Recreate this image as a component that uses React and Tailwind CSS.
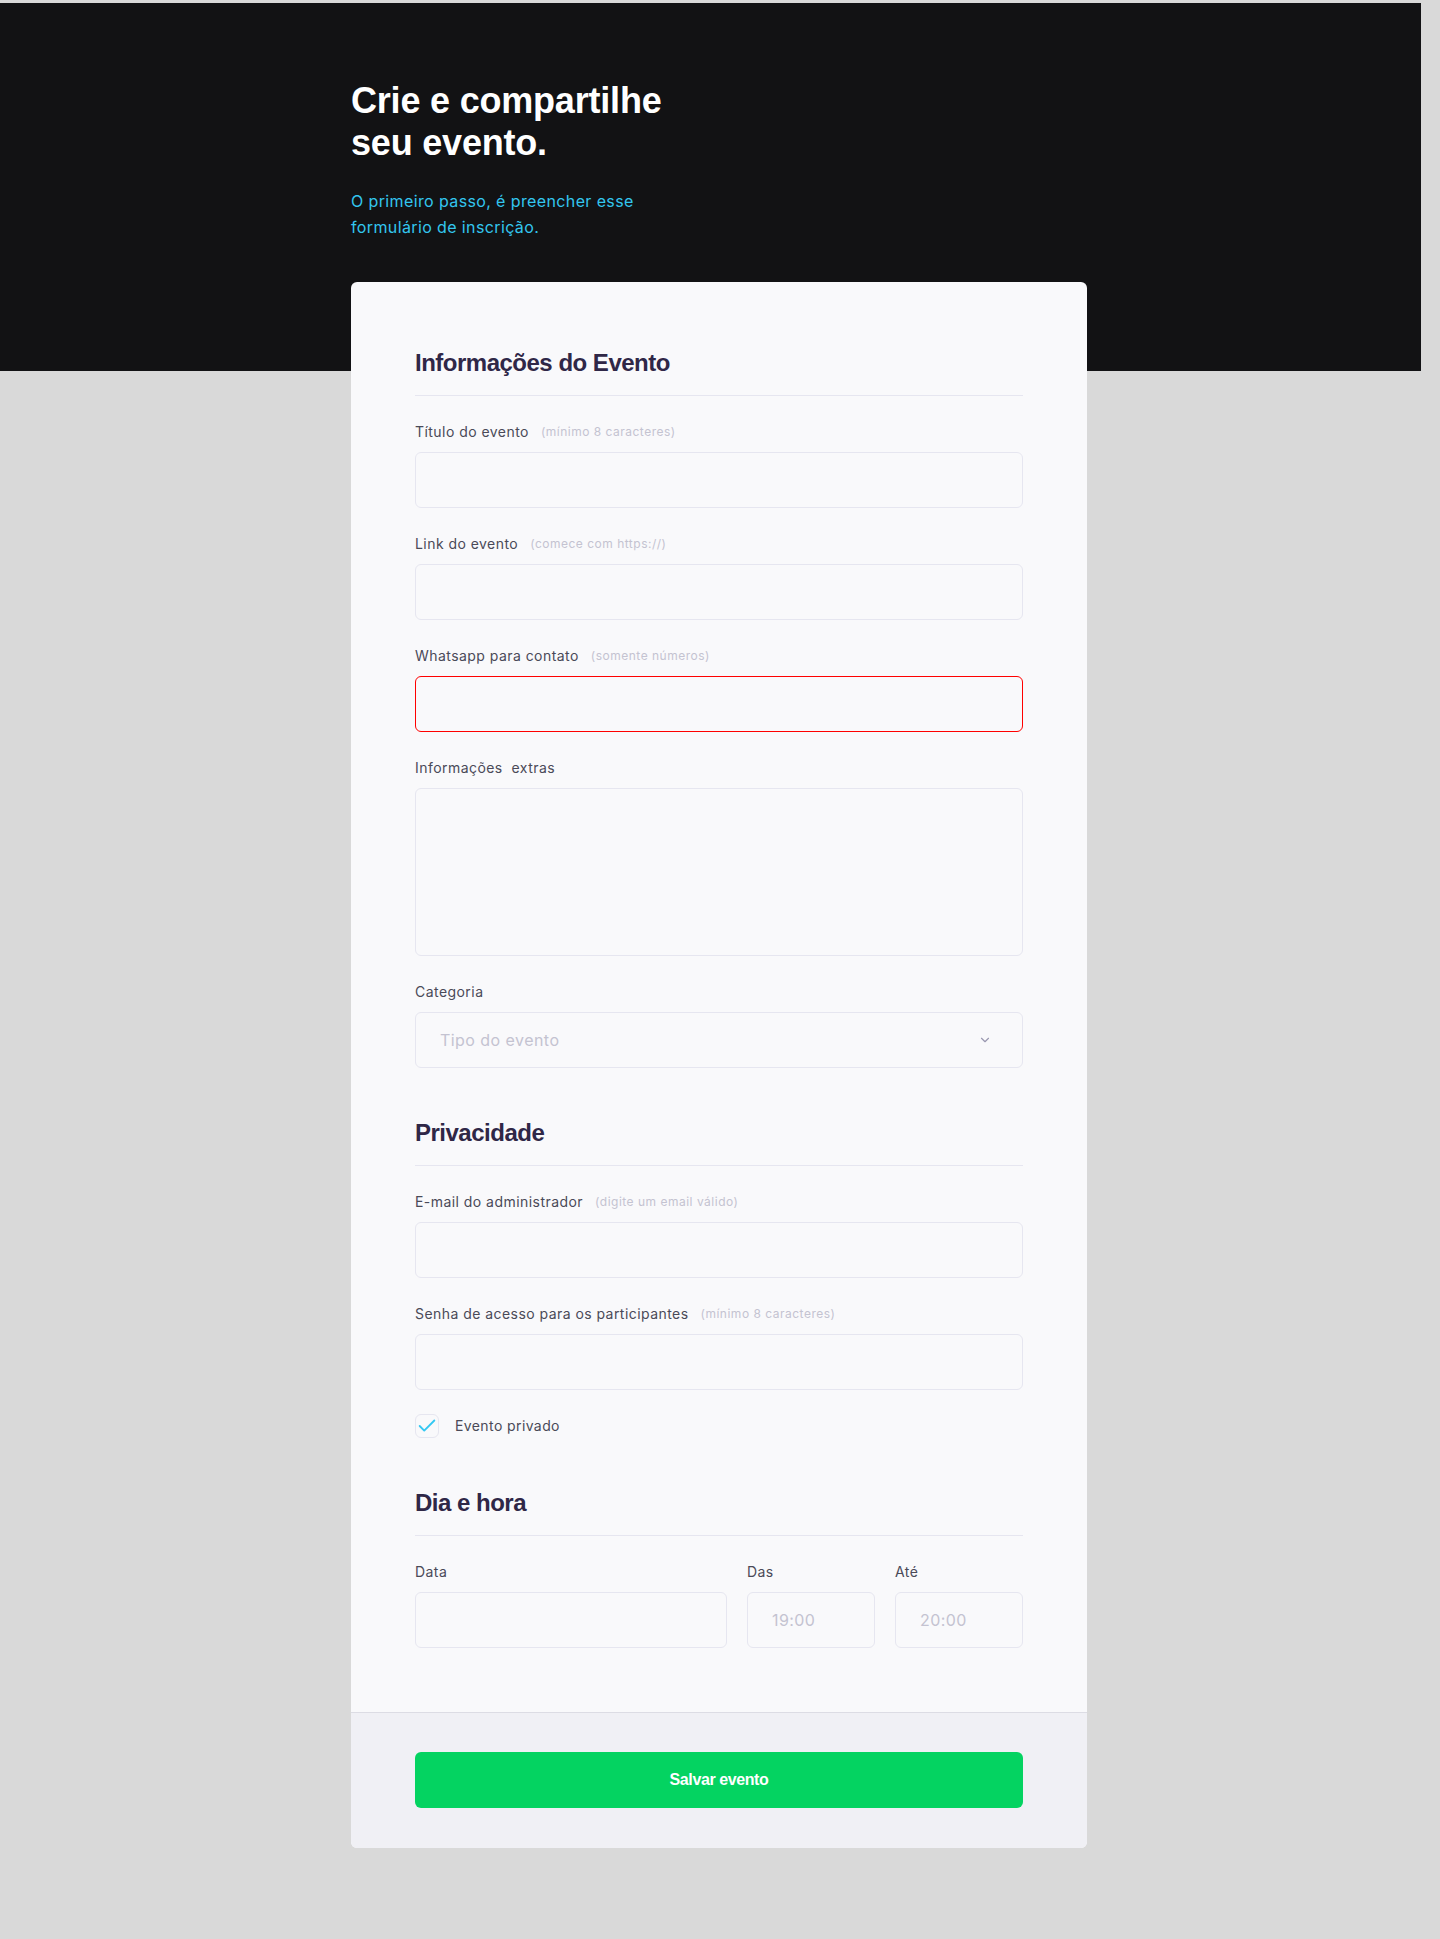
import { Check, ChevronDown } from 'lucide-react';

const body = { fontFamily: 'Inter, "Open Sans", sans-serif' };
const display = { fontFamily: '"Liberation Sans", Arial, sans-serif' };

function Label({ text, hint }) {
  return (
    <div className="mb-2 flex h-6 items-center">
      <span className="text-sm tracking-[0.45px] text-[#4a4a58]">{text}</span>
      {hint && <span className="ml-3 text-xs tracking-[0.5px] text-[#c4c3d1]">{hint}</span>}
    </div>
  );
}

function Field({ label, hint, error, tall }) {
  const border = error ? 'border-[#ff0000]' : 'border-[#e6e6f0]';
  return (
    <div>
      <Label text={label} hint={hint} />
      {tall ? (
        <textarea className={`block h-[168px] w-full resize-none rounded-md border ${border} bg-[#f9f9fb] px-6 py-4 outline-none`} />
      ) : (
        <input className={`block h-14 w-full rounded-md border ${border} bg-[#f9f9fb] px-6 outline-none`} />
      )}
    </div>
  );
}

function SectionTitle({ children, first }) {
  return (
    <h2
      style={display}
      className={`${first ? '' : 'mt-[49px]'} border-b border-[#e6e6f0] pb-4 text-2xl leading-8 font-bold tracking-[-0.5px] text-[#2f2747]`}
    >
      {children}
    </h2>
  );
}

export default function App() {
  return (
    <div style={body} className="min-h-screen bg-[#d9d9d9] pt-[3px] pb-[92px]">
      {/* HEADER */}
      <header className="bg-[#121214] pt-[77px] pb-[131px] shadow-[inset_-19px_0_0_#d9d9d9]">
        <div className="ml-[calc(50%-369px)] w-[736px]">
          <h1 style={display} className="text-[36px] leading-[42px] font-bold tracking-[-0.2px] text-white">
            Crie e compartilhe
            <br />
            seu evento.
          </h1>
          <p className="mt-6 text-base leading-[26px] tracking-[0.38px] text-[#33c6ef]">
            O primeiro passo, é preencher esse
            <br />
            formulário de inscrição.
          </p>
        </div>
      </header>

      {/* CARD */}
      <div className="-mt-[89px] ml-[calc(50%-369px)] w-[736px] overflow-hidden rounded-md bg-[#f9f9fb]">
        <div className="px-16 pt-[65px] pb-16">
          <SectionTitle first>Informações do Evento</SectionTitle>
          <div className="mt-6 space-y-6">
            <Field label="Título do evento" hint="(mínimo 8 caracteres)" />
            <Field label="Link do evento" hint="(comece com https://)" />
            <Field label="Whatsapp para contato" hint="(somente números)" error />
            <Field label={'Informações\u00a0 extras'} tall />
            <div>
              <Label text="Categoria" />
              <div className="flex h-14 w-full items-center justify-between rounded-md border border-[#e6e6f0] bg-[#f9f9fb] pr-[30px] pl-6">
                <span className="text-base tracking-[0.45px] text-[#c4c3d1]">Tipo do evento</span>
                <ChevronDown size={14} strokeWidth={2} className="text-[#9a98b0]" />
              </div>
            </div>
          </div>

          <SectionTitle>Privacidade</SectionTitle>
          <div className="mt-6 space-y-6">
            <Field label="E-mail do administrador" hint="(digite um email válido)" />
            <Field label="Senha de acesso para os participantes" hint="(mínimo 8 caracteres)" />
            <label className="flex items-center">
              <span className="flex h-6 w-6 items-center justify-center rounded-md border border-[#e6e6f0] bg-[#f9f9fb]">
                <Check size={24} strokeWidth={2} className="text-[#34c8f2]" />
              </span>
              <span className="ml-4 text-sm tracking-[0.4px] text-[#4a4a58]">Evento privado</span>
            </label>
          </div>

          <SectionTitle>Dia e hora</SectionTitle>
          <div className="mt-6 grid grid-cols-[1fr_128px_128px] gap-5">
            <div>
              <Label text="Data" />
              <input className="block h-14 w-full rounded-md border border-[#e6e6f0] bg-[#f9f9fb] px-6 outline-none" />
            </div>
            <div>
              <Label text="Das" />
              <input placeholder="19:00" className="block h-14 w-full rounded-md border border-[#e6e6f0] bg-[#f9f9fb] px-6 text-base tracking-[0.4px] outline-none placeholder:text-[#c4c3d1]" />
            </div>
            <div>
              <Label text="Até" />
              <input placeholder="20:00" className="block h-14 w-full rounded-md border border-[#e6e6f0] bg-[#f9f9fb] px-6 text-base tracking-[0.4px] outline-none placeholder:text-[#c4c3d1]" />
            </div>
          </div>
        </div>

        <div className="border-t border-[#dcdce4] bg-[#f0f0f5] px-16 pt-[39px] pb-[40px]">
          <button
            style={display}
            className="h-14 w-full rounded-md bg-[#04d361] text-base font-bold tracking-[-0.4px] text-white"
          >
            Salvar evento
          </button>
        </div>
      </div>
    </div>
  );
}
